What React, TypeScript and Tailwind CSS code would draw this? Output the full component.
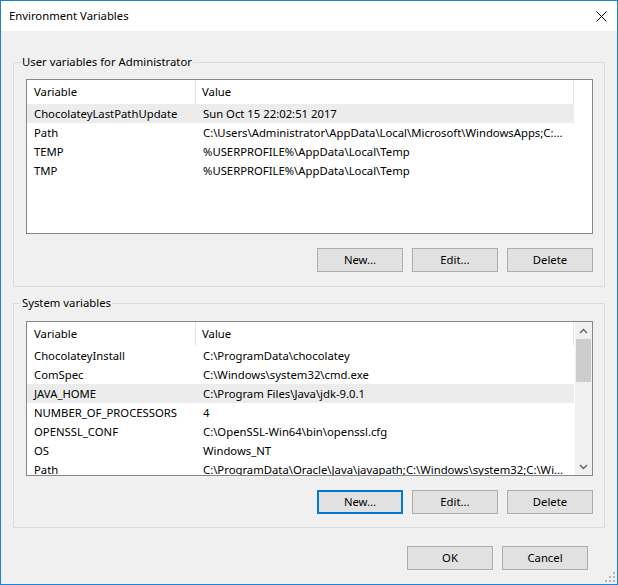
import React from "react";

type Row = [string, string];

const userVars: Row[] = [
  ["ChocolateyLastPathUpdate", "Sun Oct 15 22:02:51 2017"],
  ["Path", "C:\\Users\\Administrator\\AppData\\Local\\Microsoft\\WindowsApps;C:..."],
  ["TEMP", "%USERPROFILE%\\AppData\\Local\\Temp"],
  ["TMP", "%USERPROFILE%\\AppData\\Local\\Temp"],
];

const systemVars: Row[] = [
  ["ChocolateyInstall", "C:\\ProgramData\\chocolatey"],
  ["ComSpec", "C:\\Windows\\system32\\cmd.exe"],
  ["JAVA_HOME", "C:\\Program Files\\Java\\jdk-9.0.1"],
  ["NUMBER_OF_PROCESSORS", "4"],
  ["OPENSSL_CONF", "C:\\OpenSSL-Win64\\bin\\openssl.cfg"],
  ["OS", "Windows_NT"],
  ["Path", "C:\\ProgramData\\Oracle\\Java\\javapath;C:\\Windows\\system32;C:\\Wi..."],
];

function Chevron({ down }: { down?: boolean }) {
  return (
    <svg width="9" height="6" viewBox="0 0 9 6" className={down ? "rotate-180" : ""}>
      <path d="M1 5 L4.5 1.5 L8 5" fill="none" stroke="#606060" strokeWidth="1.4" />
    </svg>
  );
}

function Button({ label, focused }: { label: string; focused?: boolean }) {
  return (
    <button
      className={
        focused
          ? "w-[86px] h-[24px] bg-[#e1e1e1] border-2 border-[#0078d7] text-black"
          : "w-[86px] h-[24px] bg-[#e1e1e1] border border-[#adadad] text-black"
      }
    >
      {label}
    </button>
  );
}

function VarList({ rows, selected, scroll }: { rows: Row[]; selected: number; scroll?: boolean }) {
  return (
    <div className="h-[155px] flex border border-[#828790] bg-white overflow-hidden">
      <div className="flex-1 flex flex-col">
        {/* header */}
        <div className="flex h-[24px] shrink-0">
          <div className="w-[169px] pl-[7px] flex items-center border-r border-[#e5e5e5]">Variable</div>
          <div className="w-[378px] pl-[6px] flex items-center border-r border-[#e5e5e5]">Value</div>
        </div>
        {rows.map(([name, value], i) => (
          <div
            key={name + i}
            className={
              i === selected
                ? "flex w-[547px] h-[19px] shrink-0 items-center bg-[#ececec]"
                : "flex w-[547px] h-[19px] shrink-0 items-center"
            }
          >
            <div className="w-[169px] pl-[7px] whitespace-nowrap overflow-hidden">{name}</div>
            <div className="w-[378px] pl-[7px] whitespace-nowrap overflow-hidden">{value}</div>
          </div>
        ))}
      </div>
      {scroll && (
        <div className="w-[17px] shrink-0 flex flex-col bg-[#f0f0f0]">
          <div className="h-[17px] flex items-center justify-center">
            <Chevron />
          </div>
          <div className="h-[43px] mx-[1px] bg-[#cdcdcd]" />
          <div className="flex-1" />
          <div className="h-[17px] flex items-center justify-center">
            <Chevron down />
          </div>
        </div>
      )}
    </div>
  );
}

export default function App() {
  return (
    <div
      className="w-[618px] h-[585px] flex flex-col border border-[#1883d7] bg-[#f0f0f0] text-[11.3px] text-black leading-[16px]"
      style={{ fontFamily: '"Noto Sans", "Liberation Sans", sans-serif' }}
    >
      {/* Title bar */}
      <div className="h-[30px] shrink-0 bg-white flex items-center justify-between pl-[8px] pr-[10px]">
        <span>Environment Variables</span>
        <svg width="11" height="11" viewBox="0 0 11 11">
          <path d="M0.5 0.5 L10.5 10.5 M10.5 0.5 L0.5 10.5" stroke="#000" strokeWidth="1" />
        </svg>
      </div>

      {/* User variables */}
      <fieldset className="mt-[23px] mx-[12px] border border-[#dcdcdc] pt-[9px] pl-[12px] pr-[11px] pb-[14px]">
        <legend className="ml-[-5px] px-[1px]">User variables for Administrator</legend>
        <VarList rows={userVars} selected={0} />
        <div className="mt-[14px] flex justify-end gap-[9px]">
          <Button label="New..." />
          <Button label="Edit..." />
          <Button label="Delete" />
        </div>
      </fieldset>

      {/* System variables */}
      <fieldset className="mt-[8px] mx-[12px] border border-[#dcdcdc] pt-[10px] pl-[12px] pr-[11px] pb-[13px]">
        <legend className="ml-[-5px] px-[1px]">System variables</legend>
        <VarList rows={systemVars} selected={2} scroll />
        <div className="mt-[14px] flex justify-end gap-[9px]">
          <Button label="New..." focused />
          <Button label="Edit..." />
          <Button label="Delete" />
        </div>
      </fieldset>

      {/* Dialog buttons */}
      <div className="mt-[18px] flex justify-end gap-[9px] pr-[29px]">
        <Button label="OK" />
        <Button label="Cancel" />
      </div>

      <div className="flex-1 flex items-end justify-end pr-[2px] pb-[2px]">
        <svg width="10" height="10" viewBox="0 0 10 10">
          <rect x="8" y="0" width="2" height="2" fill="#b8b8b8" />
          <rect x="4" y="4" width="2" height="2" fill="#b8b8b8" />
          <rect x="8" y="4" width="2" height="2" fill="#b8b8b8" />
          <rect x="0" y="8" width="2" height="2" fill="#b8b8b8" />
          <rect x="4" y="8" width="2" height="2" fill="#b8b8b8" />
          <rect x="8" y="8" width="2" height="2" fill="#b8b8b8" />
        </svg>
      </div>
    </div>
  );
}
